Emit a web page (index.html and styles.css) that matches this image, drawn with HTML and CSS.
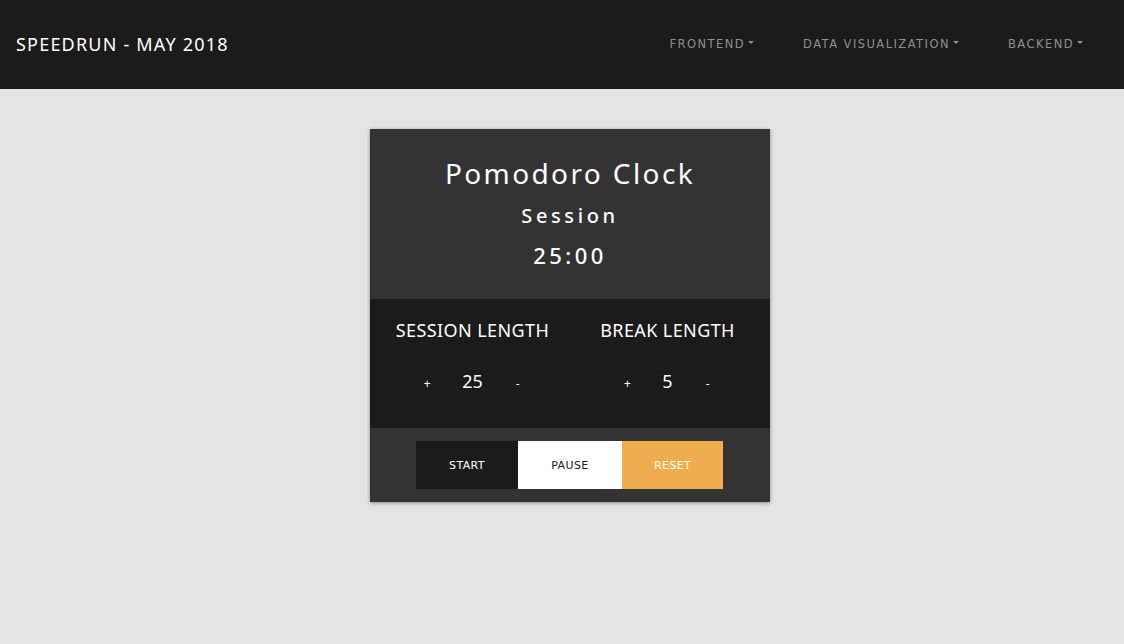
FILE: index.html
```html
<!DOCTYPE html>
<html>
<head>
<meta charset="utf-8">
<link rel="stylesheet" href="styles.css">
</head>
<body>
<nav class="navbar">
  <div class="brand">SPEEDRUN - MAY 2018</div>
  <ul class="menu">
    <li class="menu-item">FRONTEND<span class="caret"></span></li>
    <li class="menu-item">DATA VISUALIZATION<span class="caret"></span></li>
    <li class="menu-item">BACKEND<span class="caret"></span></li>
  </ul>
</nav>
<main class="main">
  <section class="card">
    <div class="card-head">
      <h1 class="title">Pomodoro Clock</h1>
      <div class="mode">Session</div>
      <div class="time">25:00</div>
    </div>
    <div class="settings">
      <div class="setting">
        <div class="setting-label">SESSION LENGTH</div>
        <div class="controls">
          <span class="ctl plus">+</span>
          <span class="value">25</span>
          <span class="ctl minus">-</span>
        </div>
      </div>
      <div class="setting">
        <div class="setting-label">BREAK LENGTH</div>
        <div class="controls">
          <span class="ctl plus">+</span>
          <span class="value">5</span>
          <span class="ctl minus">-</span>
        </div>
      </div>
    </div>
    <div class="actions">
      <div class="btn-group">
        <button class="btn btn-start">START</button>
        <button class="btn btn-pause">PAUSE</button>
        <button class="btn btn-reset">RESET</button>
      </div>
    </div>
  </section>
</main>
</body>
</html>
```

FILE: styles.css
```css
* { box-sizing: border-box; }
html, body { margin: 0; padding: 0; }
body {
  background: #e4e4e4;
  font-family: "Noto Sans", "DejaVu Sans", sans-serif;
  min-height: 644px;
}
.navbar {
  height: 89px;
  background: #1b1b1b;
  display: flex;
  align-items: center;
  justify-content: space-between;
  padding: 0 16px;
}
.brand {
  color: #fff;
  font-size: 18px;
  letter-spacing: 1.2px;
  margin-top: -2px;
  font-family: "Noto Sans", sans-serif;
}
.menu {
  list-style: none;
  margin: -2px 0 0;
  padding: 0 25px 0 0;
  display: flex;
  gap: 49px;
}
.menu-item {
  color: #8f8f8f;
  font-family: "DejaVu Sans", sans-serif;
  font-size: 11.5px;
  letter-spacing: 1.45px;
  display: flex;
  align-items: center;
}
.caret {
  display: inline-block;
  margin-left: 3px;
  border-top: 3px solid #8f8f8f;
  border-left: 3px solid transparent;
  border-right: 3px solid transparent;
  margin-top: -2px;
}
.main {
  display: flex;
  justify-content: center;
  padding-top: 40px;
  padding-left: 16px;
}
.card {
  width: 400px;
  background: #333;
  box-shadow: 0 1px 4px rgba(0,0,0,0.4);
}
.card-head {
  height: 170px;
  display: flex;
  flex-direction: column;
  align-items: center;
  padding-top: 25px;
  color: #fff;
}
.title {
  margin: 0;
  font-weight: 400;
  font-size: 28px;
  letter-spacing: 2.4px;
  line-height: 38px;
}
.mode {
  font-size: 20px;
  letter-spacing: 3.6px;
  line-height: 26px;
  margin-top: 11px;
  font-weight: 500;
}
.time {
  font-size: 22px;
  letter-spacing: 3.4px;
  line-height: 30px;
  margin-top: 11px;
  font-weight: 500;
}
.settings {
  height: 129px;
  background: #1b1b1b;
  display: flex;
  padding: 18px 5px 0;
}
.setting {
  flex: 1;
  display: flex;
  flex-direction: column;
  align-items: center;
  color: #fff;
}
.setting-label {
  font-size: 18px;
  letter-spacing: 0.4px;
  line-height: 26px;
}
.controls {
  display: flex;
  align-items: center;
  margin-top: 26px;
}
.ctl {
  font-size: 12px;
  width: 20px;
  text-align: center;
  padding-top: 4px;
}
.value {
  font-size: 18px;
  margin: 0 25px;
  text-align: center;
}
.actions {
  height: 74px;
  display: flex;
  padding: 13px 0 0 46px;
}
.btn-group {
  display: flex;
  height: 48px;
}
.btn {
  border: 0;
  margin: 0;
  font-family: "DejaVu Sans", sans-serif;
  font-size: 11px;
  letter-spacing: 0.4px;
  cursor: pointer;
}
.btn-start { width: 102px; background: #1b1b1b; color: #fff; }
.btn-pause { width: 104px; background: #fff; color: #1b1b1b; }
.btn-reset { width: 101px; background: #f0ad4e; color: #fff; }
```
